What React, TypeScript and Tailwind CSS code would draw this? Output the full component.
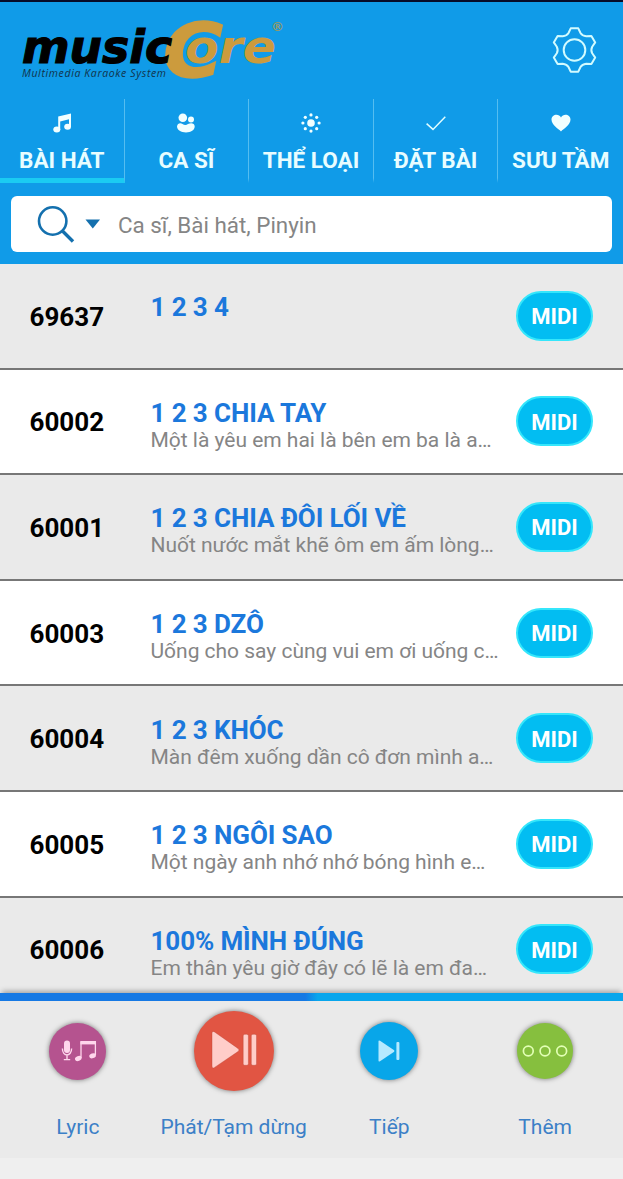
import { useState } from "react";
import type { ReactNode } from "react";

interface Song {
    code: string;
    title: string;
    lyric?: string;
}

interface Tab {
    label: string;
    icon: ReactNode;
}

interface Control {
    label: string;
    icon: ReactNode;
}

const songs: Song[] = [
    { code: "69637", title: "1 2 3 4" },
    { code: "60002", title: "1 2 3 CHIA TAY", lyric: "Một là yêu em hai là bên em ba là a…" },
    { code: "60001", title: "1 2 3 CHIA ĐÔI LỐI VỀ", lyric: "Nuốt nước mắt khẽ ôm em ấm lòng…" },
    { code: "60003", title: "1 2 3 DZÔ", lyric: "Uống cho say cùng vui em ơi uống c…" },
    { code: "60004", title: "1 2 3 KHÓC", lyric: "Màn đêm xuống dần cô đơn mình a…" },
    { code: "60005", title: "1 2 3 NGÔI SAO", lyric: "Một ngày anh nhớ nhớ bóng hình e…" },
    { code: "60006", title: "100% MÌNH ĐÚNG", lyric: "Em thân yêu giờ đây có lẽ là em đa…" },
];

const tabs: Tab[] = [
    {
        label: "BÀI HÁT",
        icon: (
            <svg width="20" height="20" viewBox="0 0 20 20" fill="#f2ffff">
                <path d="M6.2 3.4 19 0.4V14H17V6.2L8.2 8.4V17H6.2Z" />
                <ellipse cx="4.8" cy="16.6" rx="3.5" ry="3" />
                <ellipse cx="15.6" cy="13.8" rx="3.4" ry="3" />
            </svg>
        ),
    },
    {
        label: "CA SĨ",
        icon: (
            <svg width="20" height="20" viewBox="0 0 20 20" fill="#f2ffff">
                <circle cx="6.8" cy="4.7" r="4.3" />
                <circle cx="15" cy="6.4" r="3" />
                <path d="M1 13.5C1.5 10 4.5 9.6 6.5 11Q9.4 13 12 11C15 9.4 18.6 10 18.7 13.5C18.6 17 15 19.4 10 19.4S1.2 17 1 13.5Z" />
            </svg>
        ),
    },
    {
        label: "THỂ LOẠI",
        icon: (
            <svg width="20" height="20" viewBox="0 0 20 20" fill="#f2ffff">
                <circle cx="10" cy="10" r="3.8" />
                <circle cx="10" cy="1.9" r="1.6" />
                <circle cx="10" cy="18.1" r="1.6" />
                <circle cx="1.9" cy="10" r="1.6" />
                <circle cx="18.1" cy="10" r="1.6" />
                <circle cx="4.3" cy="4.3" r="1.6" />
                <circle cx="15.7" cy="4.3" r="1.6" />
                <circle cx="4.3" cy="15.7" r="1.6" />
                <circle cx="15.7" cy="15.7" r="1.6" />
            </svg>
        ),
    },
    {
        label: "ĐẶT BÀI",
        icon: (
            <svg width="20" height="20" viewBox="0 0 20 20" fill="none" stroke="#e0fdff" strokeWidth="1.5">
                <path d="M0.6 10.6 7 16.4 19.3 3.8" />
            </svg>
        ),
    },
    {
        label: "SƯU TẦM",
        icon: (
            <svg width="20" height="20" viewBox="0 0 20 20" fill="#f2ffff">
                <path d="M10 18.4C7.4 16 0.5 12 0.5 6.6C0.5 1.2 7.8 0.2 10 4.4C12.2 0.2 19.5 1.2 19.5 6.6C19.5 12 12.6 16 10 18.4Z" />
            </svg>
        ),
    },
];

const controls: Control[] = [
    {
        label: "Lyric",
        icon: (
            <div className="flex size-[57px] items-center justify-center rounded-full bg-[#b5538f] pl-0.5 shadow-[0_0_5px_rgba(0,0,0,0.5)]">
                <svg width="36" height="24" viewBox="0 0 36 24" fill="#ffd6ec">
                    <rect x="3" y="1.5" width="6" height="12.5" rx="3" />
                    <path d="M1.4 9.5C1.4 18 10.6 18 10.6 9.5M6 16V20.4M2.8 20.6H9.2" fill="none" stroke="#ffd6ec" strokeWidth="1.4" />
                    <path d="M20 19V3.2H34.4V16" fill="none" stroke="#ffd6ec" strokeWidth="1.3" />
                    <rect x="19.4" y="2" width="15.6" height="3.4" />
                    <ellipse cx="17.3" cy="19.5" rx="3.4" ry="2.4" transform="rotate(-20 17.3 19.5)" />
                    <ellipse cx="31.6" cy="16.8" rx="3.4" ry="2.4" transform="rotate(-20 31.6 16.8)" />
                </svg>
            </div>
        ),
    },
    {
        label: "Phát/Tạm dừng",
        icon: (
            <div className="mb-px flex size-[80px] items-center justify-center rounded-full bg-[#e15543] shadow-[0_0_5px_rgba(0,0,0,0.5)]">
                <svg width="46" height="38" viewBox="0 0 46 38" className="mb-0.5" fill="#ffcdc9" stroke="#b94436" strokeWidth="0.4">
                    <path d="M1 2.4Q1 -0.6 3.6 1L27 17.4Q29 19 27 20.6L3.6 36.4Q1 38 1 35Z" />
                    <rect x="32.2" y="3.3" width="5.2" height="31" rx="1.5" />
                    <rect x="40.3" y="3.3" width="5.2" height="31" rx="1.5" />
                </svg>
            </div>
        ),
    },
    {
        label: "Tiếp",
        icon: (
            <div className="flex size-[58px] items-center justify-center rounded-full bg-[#08a6e9] shadow-[0_0_5px_rgba(0,0,0,0.5)]">
                <svg width="22" height="22" viewBox="0 0 22 22" fill="#b5e9ff">
                    <path d="M0.5 1.4Q0.5 -0.2 2 0.7L15.8 10Q17 11 15.8 12L2 21.3Q0.5 22.2 0.5 20.6Z" />
                    <rect x="18.4" y="2" width="3" height="18" rx="1" />
                </svg>
            </div>
        ),
    },
    {
        label: "Thêm",
        icon: (
            <div className="flex size-[56px] items-center justify-center rounded-full bg-[#86bf3e] shadow-[0_0_5px_rgba(0,0,0,0.5)]">
                <svg width="46" height="14" viewBox="0 0 46 14" fill="none" stroke="#e2ffb5" strokeWidth="1.7">
                    <circle cx="6.3" cy="7" r="4.9" />
                    <circle cx="23" cy="7" r="4.9" />
                    <circle cx="39.7" cy="7" r="4.9" />
                </svg>
            </div>
        ),
    },
];

function Logo() {
    return (
        <svg width="270" height="64" viewBox="18 18 270 64" className="overflow-visible font-['DejaVu_Sans',sans-serif] font-bold italic">
            <text x="163" y="77" fontSize="75" fill="#cc9b3d" stroke="#cc9b3d" strokeWidth="1.5" textLength="60" lengthAdjust="spacingAndGlyphs">C</text>
            <text x="185" y="62.5" fontSize="47" fill="#cc9b3d" stroke="#109be8" strokeWidth="4" paintOrder="stroke" textLength="91" lengthAdjust="spacingAndGlyphs">ore</text>
            <text x="22" y="62.5" fontSize="47" fill="#000000" stroke="#000000" strokeWidth="1.2" textLength="150" lengthAdjust="spacingAndGlyphs">music</text>
            <text x="271" y="31" fontSize="13" fill="#91996b" className="not-italic">®</text>
            <text x="22" y="77" fontSize="10.5" fill="#10334b" textLength="144" className="font-['Open_Sans',sans-serif] font-medium">Multimedia Karaoke System</text>
        </svg>
    );
}

function SongRow({ song }: { song: Song }) {
    return (
        <li className="flex h-[105.6px] shrink-0 items-center border-b-2 border-[#777777] odd:bg-[#eaeaea] even:bg-white">
            <span className="w-[150.5px] pt-[3px] pl-[29.5px] text-[26px] font-bold text-black">{song.code}</span>
            <div className="h-[47px] w-[365.5px] whitespace-nowrap">
                <h2 className="text-[26px] leading-[30px] font-bold tracking-[-0.1px] text-[#1b78dc]">{song.title}</h2>
                <p className="text-[21px] leading-6 tracking-[-0.02px] text-[#858585]">{song.lyric}</p>
            </div>
            <span className="flex h-[50px] w-[77px] items-center justify-center rounded-full border-2 border-[#35e6fb] bg-[#02bdf2] pt-0.5 text-[22px] font-bold text-white">
                MIDI
            </span>
        </li>
    );
}

export default function App() {
    const [activeTab, setActiveTab] = useState(0);

    return (
        <div className="flex h-[1179px] w-[623px] flex-col overflow-hidden bg-[#efefef] font-['Roboto','Noto_Sans',sans-serif]">
            <header className="h-[264px] shrink-0 border-t-2 border-[#060b28] bg-[#109be8]">
                <div className="flex h-[97px] items-start justify-between pt-4 pr-[25px] pl-[18px]">
                    <Logo />
                    <button aria-label="Settings" className="mt-2">
                        <svg width="48" height="48" viewBox="-24.5 -24 48 48" fill="none" stroke="#d2fbff" strokeWidth="2" strokeLinejoin="round">
                            <path d="M-3.8 -21.7H3.8L6 -17Q7.7 -14.2 11.7 -13.7L16.9 -14.1L20.7 -7.6L17.7 -3.3Q16 0 17.7 3.3L20.7 7.6L16.9 14.1L11.7 13.7Q7.7 14.2 6 17L3.8 21.7H-3.8L-6 17Q-7.7 14.2 -11.7 13.7L-16.9 14.1L-20.7 7.6L-17.7 3.3Q-16 0 -17.7 -3.3L-20.7 -7.6L-16.9 -14.1L-11.7 -13.7Q-7.7 -14.2 -6 -17Z" />
                            <circle r="10.8" />
                        </svg>
                    </button>
                </div>

                <nav className="grid h-[84px] grid-cols-5">
                    {tabs.map((tab, i) => (
                        <button
                            key={tab.label}
                            onClick={() => setActiveTab(i)}
                            className={`flex flex-col items-center border-r border-[#55bdf0] border-b-[5px] pt-[14px] whitespace-nowrap last:border-r-0 ${
                                activeTab === i ? "border-b-[#1bcbf2]" : "border-b-transparent"
                            }`}
                        >
                            {tab.icon}
                            <span className="mt-[13px] text-[22.5px] leading-[28px] font-bold text-[#e8fdff]">{tab.label}</span>
                        </button>
                    ))}
                </nav>

                <div className="mx-[11px] mt-[13px] flex h-14 items-center rounded-md bg-white pl-[26px]">
                    <svg width="64" height="40" viewBox="0 0 64 40" fill="none" stroke="#1470ae" strokeWidth="2.6">
                        <circle cx="15.7" cy="17" r="13.7" />
                        <path d="M25.5 27 36 37.5" strokeWidth="3.4" />
                        <path d="M48.5 15.5H63L55.8 24.5Z" fill="#1470ae" stroke="none" />
                    </svg>
                    <input
                        className="ml-[17px] w-96 pt-[3px] text-[22.4px] text-[#858585] outline-none placeholder:text-[#858585]"
                        placeholder="Ca sĩ, Bài hát, Pinyin"
                    />
                </div>
            </header>

            <ul className="flex h-[729px] shrink-0 flex-col overflow-hidden">
                {songs.map((song) => (
                    <SongRow key={song.code} song={song} />
                ))}
            </ul>

            <footer className="relative h-[165px] shrink-0 bg-[#eaeaea] shadow-[0_-4px_5px_-2px_rgba(0,0,0,0.3)]">
                <div className="h-2 bg-linear-to-r from-[#1679e4] from-49% to-[#08a6ec] to-51%" />
                <div className="grid grid-cols-4">
                    {controls.map((control) => (
                        <button key={control.label} className="flex flex-col items-center whitespace-nowrap">
                            <span className="flex h-[100px] items-center justify-center">{control.icon}</span>
                            <span className="mt-3 text-[21px] leading-7 text-[#3c80c7]">{control.label}</span>
                        </button>
                    ))}
                </div>
            </footer>
        </div>
    );
}
